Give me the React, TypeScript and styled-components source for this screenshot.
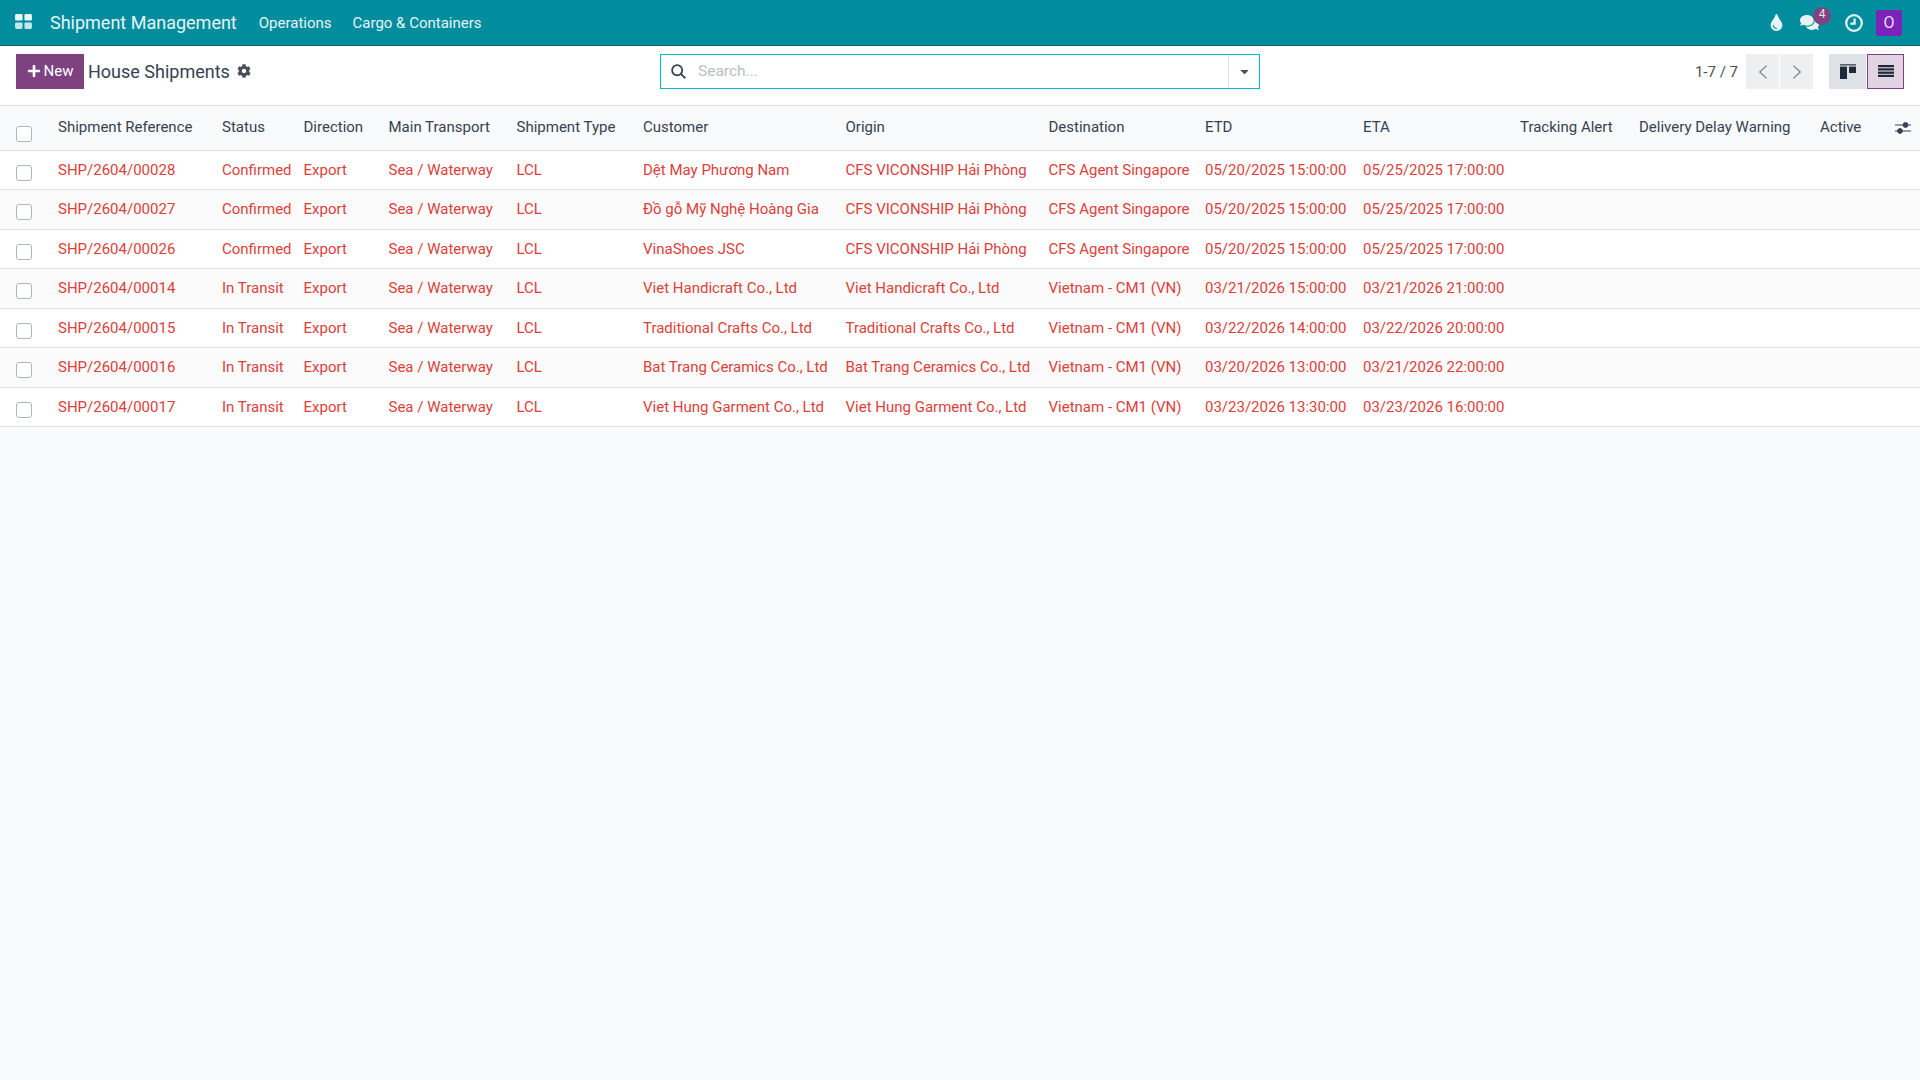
import React from "react";
import styled, { createGlobalStyle } from "styled-components";
import { FaCaretDown, FaCog, FaComments, FaPlus, FaTint } from "react-icons/fa";

const COLUMNS = [
  { label: "Shipment Reference", width: 164 },
  { label: "Status", width: 81.5 },
  { label: "Direction", width: 85 },
  { label: "Main Transport", width: 128 },
  { label: "Shipment Type", width: 126.5 },
  { label: "Customer", width: 202.5 },
  { label: "Origin", width: 203 },
  { label: "Destination", width: 156.5 },
  { label: "ETD", width: 158 },
  { label: "ETA", width: 157 },
  { label: "Tracking Alert", width: 119 },
  { label: "Delivery Delay Warning", width: 181 },
  { label: "Active", width: 73 },
];

const CFS = "CFS VICONSHIP Hải Phòng";
const AGENT = "CFS Agent Singapore";
const VN = "Vietnam - CM1 (VN)";

const SHIPMENTS = [
  ["SHP/2604/00028", "Confirmed", "Dệt May Phương Nam", CFS, AGENT, "05/20/2025 15:00:00", "05/25/2025 17:00:00"],
  ["SHP/2604/00027", "Confirmed", "Đồ gỗ Mỹ Nghệ Hoàng Gia", CFS, AGENT, "05/20/2025 15:00:00", "05/25/2025 17:00:00"],
  ["SHP/2604/00026", "Confirmed", "VinaShoes JSC", CFS, AGENT, "05/20/2025 15:00:00", "05/25/2025 17:00:00"],
  ["SHP/2604/00014", "In Transit", "Viet Handicraft Co., Ltd", "Viet Handicraft Co., Ltd", VN, "03/21/2026 15:00:00", "03/21/2026 21:00:00"],
  ["SHP/2604/00015", "In Transit", "Traditional Crafts Co., Ltd", "Traditional Crafts Co., Ltd", VN, "03/22/2026 14:00:00", "03/22/2026 20:00:00"],
  ["SHP/2604/00016", "In Transit", "Bat Trang Ceramics Co., Ltd", "Bat Trang Ceramics Co., Ltd", VN, "03/20/2026 13:00:00", "03/21/2026 22:00:00"],
  ["SHP/2604/00017", "In Transit", "Viet Hung Garment Co., Ltd", "Viet Hung Garment Co., Ltd", VN, "03/23/2026 13:30:00", "03/23/2026 16:00:00"],
];

const App = () => {
  return (
    <Page>
      <GlobalStyle />
      <Navbar>
        <AppsIcon viewBox="0 0 18 16">
          <rect x="0" y="0" width="8" height="7" rx="1.5" />
          <rect x="10" y="0" width="8" height="7" rx="1.5" />
          <rect x="0" y="9" width="8" height="7" rx="1.5" opacity="0.85" />
          <rect x="10" y="9" width="8" height="7" rx="1.5" opacity="0.85" />
        </AppsIcon>
        <Brand>Shipment Management</Brand>
        <NavLink>Operations</NavLink>
        <NavLink>Cargo &amp; Containers</NavLink>
        <Systray>
          <DropIcon>
            <FaTint />
          </DropIcon>
          <Messages>
            <FaComments />
            <Badge>4</Badge>
          </Messages>
          <ClockIcon viewBox="0 0 18 18">
            <circle cx="9" cy="9" r="7.8" />
            <path d="M9.6 4.4v5.2H5.4" />
          </ClockIcon>
          <Avatar>O</Avatar>
        </Systray>
      </Navbar>

      <ControlPanel>
        <Breadcrumb>
          <NewButton>
            <FaPlus />
            New
          </NewButton>
          <Title>House Shipments</Title>
          <GearButton>
            <FaCog />
          </GearButton>
        </Breadcrumb>
        <SearchBox>
          <SearchField>
            <SearchIcon viewBox="0 0 16 16">
              <circle cx="6.6" cy="6.6" r="5.4" />
              <path d="m10.6 10.6 4.6 4.6" />
            </SearchIcon>
            <SearchInput placeholder="Search..." />
          </SearchField>
          <SearchToggle>
            <FaCaretDown />
          </SearchToggle>
        </SearchBox>
        <Actions>
          <PagerText>1-7 / 7</PagerText>
          <PagerGroup>
            <PagerButton>
              <Chevron viewBox="0 0 12 20">
                <path d="M10.5 2 2 10l8.5 8" />
              </Chevron>
            </PagerButton>
            <PagerButton>
              <Chevron viewBox="0 0 12 20">
                <path d="M1.5 2 10 10l-8.5 8" />
              </Chevron>
            </PagerButton>
          </PagerGroup>
          <Switcher>
            <ViewButton>
              <ViewIcon viewBox="0 0 16 15">
                <rect x="0" y="0" width="16" height="1.6" opacity="0.7" />
                <rect x="0" y="2.6" width="7" height="12.4" />
                <rect x="9" y="2.6" width="7" height="6.4" />
              </ViewIcon>
            </ViewButton>
            <ViewButton $active>
              <ViewIcon viewBox="0 0 16 12">
                <rect x="0" y="0" width="16" height="2.2" />
                <rect x="0" y="3.3" width="16" height="2.2" />
                <rect x="0" y="6.6" width="16" height="2.2" />
                <rect x="0" y="9.8" width="16" height="2.2" />
              </ViewIcon>
            </ViewButton>
          </Switcher>
        </Actions>
      </ControlPanel>

      <ListTable>
        <colgroup>
          <col width={50} />
          {COLUMNS.map((column) => (
            <col key={column.label} width={column.width} />
          ))}
          <col />
        </colgroup>
        <thead>
          <tr>
            <HeadCell>
              <HeadCheck type="checkbox" />
            </HeadCell>
            {COLUMNS.map((column) => (
              <HeadCell key={column.label}>{column.label}</HeadCell>
            ))}
            <HeadCell>
              <AdjustIcon viewBox="0 0 16 12">
                <path d="M0 3h16M0 9h16" />
                <circle cx="10.5" cy="3" r="2.4" />
                <circle cx="5" cy="9" r="2.4" />
              </AdjustIcon>
            </HeadCell>
          </tr>
        </thead>
        <tbody>
          {SHIPMENTS.map(([ref, status, customer, origin, destination, etd, eta]) => (
            <Row key={ref}>
              <Cell>
                <RowCheck type="checkbox" />
              </Cell>
              <Cell>{ref}</Cell>
              <Cell>{status}</Cell>
              <Cell>Export</Cell>
              <Cell>Sea / Waterway</Cell>
              <Cell>LCL</Cell>
              <Cell>{customer}</Cell>
              <Cell>{origin}</Cell>
              <Cell>{destination}</Cell>
              <Cell>{etd}</Cell>
              <Cell>{eta}</Cell>
              <Cell />
              <Cell />
              <Cell />
              <Cell />
            </Row>
          ))}
        </tbody>
      </ListTable>
    </Page>
  );
};

export default App;

const GlobalStyle = createGlobalStyle`
  html, body {
    margin: 0;
    padding: 0;
    height: 100%;
  }
  body {
    font-family: Roboto, "Noto Sans", sans-serif;
    font-size: 15px;
    background: #f9fafb;
    color: #374151;
  }
`;

const Page = styled.div`
  min-height: 1080px;
  background: #f9fafb;
`;

const Navbar = styled.header`
  box-sizing: border-box;
  height: 46px;
  display: flex;
  align-items: center;
  padding: 0 18px 0 15px;
  background: #018d9e;
  border-bottom: 1px solid #0b5f69;
  color: #ffffff;
`;

const AppsIcon = styled.svg`
  width: 17px;
  height: 15px;
  margin: -3px 18px 0 0;
  fill: #e8f6f7;
`;

const Brand = styled.span`
  font-size: 18px;
  margin-right: 22px;
  color: #e6f4f5;
`;

const NavLink = styled.a`
  font-size: 15px;
  margin-right: 21px;
  color: #e6f4f5;
`;

const Systray = styled.div`
  margin-left: auto;
  display: flex;
  align-items: center;
`;

const DropIcon = styled.span`
  display: flex;
  font-size: 17px;
  margin-right: 15px;
  color: #e6f4f5;
`;

const Messages = styled.span`
  position: relative;
  display: flex;
  font-size: 19px;
  margin-right: 26px;
  color: #e6f4f5;
`;

const Badge = styled.span`
  position: absolute;
  top: -6px;
  left: 13px;
  width: 18px;
  height: 18px;
  border-radius: 50%;
  background: #7f4282;
  color: #e9dfe9;
  font-size: 12px;
  line-height: 15px;
  text-align: center;
`;

const ClockIcon = styled.svg`
  width: 18px;
  height: 18px;
  margin-right: 13px;
  fill: none;
  stroke: #e6f4f5;
  stroke-width: 2.2;
`;

const Avatar = styled.span`
  width: 26px;
  height: 26px;
  border-radius: 3px;
  background: #7b23b9;
  color: #e8dcf2;
  font-size: 16px;
  line-height: 26px;
  text-align: center;
`;

const ControlPanel = styled.div`
  box-sizing: border-box;
  height: 60px;
  display: grid;
  grid-template-columns: 1fr 600px 1fr;
  align-items: start;
  padding: 8px 16px 0;
  background: #ffffff;
  border-bottom: 1px solid #dee2e6;
`;

const Breadcrumb = styled.div`
  display: flex;
  align-items: center;
  height: 35px;
`;

const NewButton = styled.button`
  box-sizing: border-box;
  width: 68px;
  height: 35px;
  display: flex;
  align-items: center;
  justify-content: center;
  gap: 3px;
  padding: 0 0 1px;
  border: none;
  background: #7f4280;
  color: #ffffff;
  font-family: Roboto, sans-serif;
  font-size: 15px;
  svg {
    font-size: 14px;
  }
`;

const Title = styled.span`
  margin-left: 4px;
  font-size: 18px;
  color: #374151;
`;

const GearButton = styled.span`
  display: flex;
  margin: -2px 0 0 7px;
  font-size: 14px;
  color: #495057;
`;

const SearchBox = styled.div`
  box-sizing: border-box;
  height: 35px;
  display: flex;
  border: 1px solid #00bcd0;
  background: #ffffff;
`;

const SearchField = styled.div`
  flex: 1;
  display: flex;
  align-items: center;
  gap: 12px;
  padding: 0 0 1px 10px;
`;

const SearchIcon = styled.svg`
  width: 15px;
  height: 15px;
  flex: none;
  fill: none;
  stroke: #374151;
  stroke-width: 1.9;
`;

const SearchInput = styled.input`
  flex: 1;
  border: none;
  outline: none;
  background: none;
  font-family: Roboto, sans-serif;
  font-size: 15.5px;
  color: #374151;
  padding: 0;
  &::placeholder {
    color: #b9bec4;
  }
`;

const SearchToggle = styled.div`
  width: 30px;
  display: flex;
  align-items: center;
  justify-content: center;
  border-left: 1px solid #dee2e6;
  font-size: 13px;
  color: #495057;
`;

const Actions = styled.div`
  display: flex;
  align-items: center;
  justify-content: flex-end;
  height: 35px;
`;

const PagerText = styled.span`
  margin-right: 8px;
  font-size: 15px;
  color: #495057;
`;

const PagerGroup = styled.div`
  display: flex;
  gap: 1px;
  margin-right: 16px;
`;

const PagerButton = styled.button`
  width: 33px;
  height: 35px;
  padding: 0;
  border: none;
  display: flex;
  align-items: center;
  justify-content: center;
  background: #edeff1;
`;

const Chevron = styled.svg`
  width: 10px;
  height: 16px;
  fill: none;
  stroke: #7c8086;
  stroke-width: 1.6;
`;

const Switcher = styled.div`
  display: flex;
  gap: 1px;
`;

const ViewButton = styled.button<{ $active?: boolean }>`
  box-sizing: border-box;
  width: 37px;
  height: 35px;
  padding: 0 0 1px;
  display: flex;
  align-items: center;
  justify-content: center;
  background: ${(p) => (p.$active ? "#e2d3e2" : "#dee2e6")};
  border: ${(p) => (p.$active ? "1px solid #7f4280" : "none")};
`;

const ViewIcon = styled.svg`
  width: 16px;
  height: auto;
  fill: #1f2937;
`;

const ListTable = styled.table`
  width: 100%;
  table-layout: fixed;
  border-collapse: separate;
  border-spacing: 0;
`;

const HeadCell = styled.th`
  box-sizing: border-box;
  height: 44.5px;
  padding: 0 8px 2px;
  text-align: left;
  font-weight: 400;
  white-space: nowrap;
  color: #374151;
  background: #f9fafb;
  border-bottom: 1px solid #dee2e6;
`;

const Row = styled.tr`
  background: #ffffff;
  &:nth-child(even) {
    background: #fbfbfb;
  }
`;

const Cell = styled.td`
  box-sizing: border-box;
  height: 39.5px;
  padding: 0 8px;
  white-space: nowrap;
  color: #dd3f3c;
  border-bottom: 1px solid #dee2e6;
`;

const RowCheck = styled.input`
  appearance: none;
  display: block;
  box-sizing: border-box;
  width: 16px;
  height: 16px;
  margin: 6px 0 0 8px;
  border: 1px solid #adb5bd;
  border-radius: 3px;
  background: #ffffff;
`;

const HeadCheck = styled(RowCheck)`
  margin-top: 14px;
`;

const AdjustIcon = styled.svg`
  display: block;
  width: 16px;
  height: 12px;
  margin: 2px 0 0 2px;
  fill: #374151;
  stroke: #374151;
  stroke-width: 1;
`;
